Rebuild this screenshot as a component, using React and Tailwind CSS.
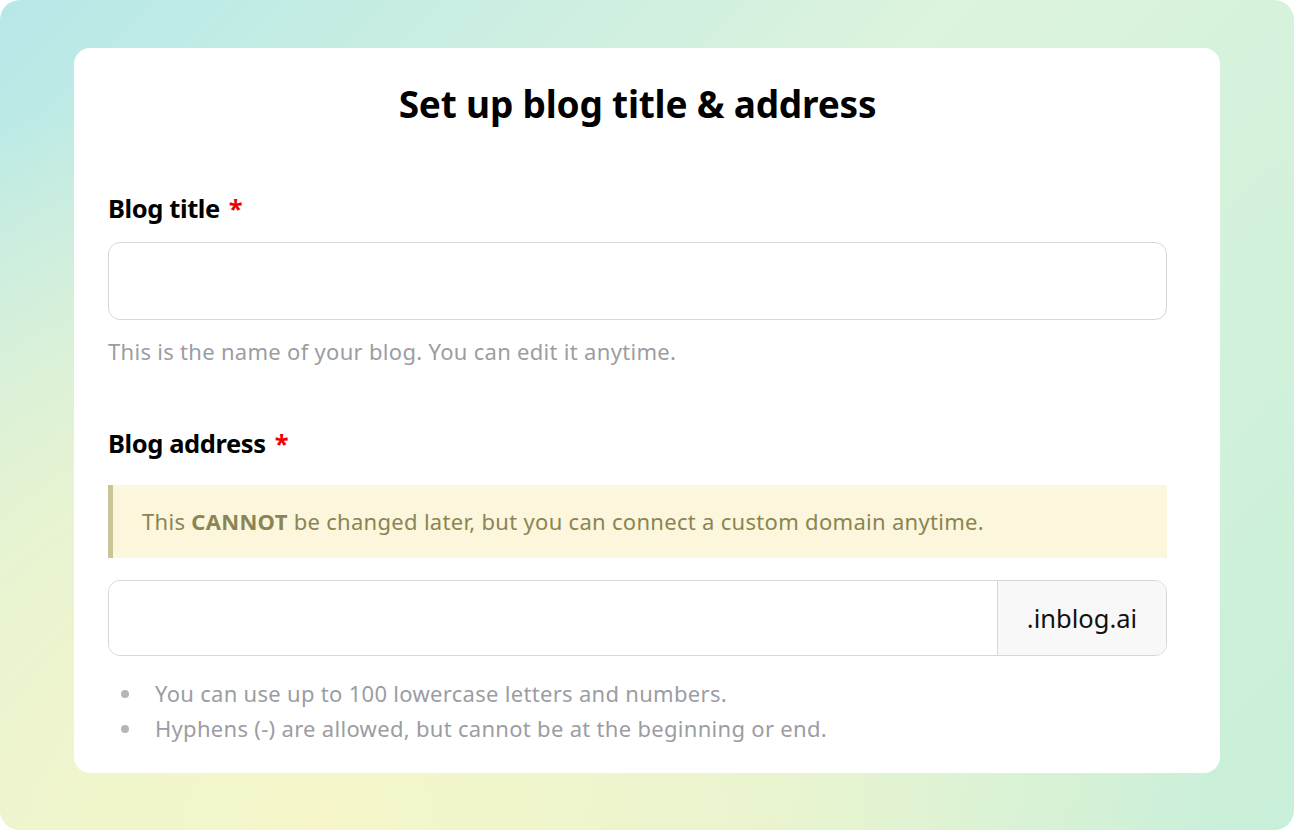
import React from "react";

export default function App() {
  return (
    <div
      className="w-[1294px] h-[830px] bg-white"
      style={{ fontFamily: '"Noto Sans", "Open Sans", sans-serif' }}
    >
      <div className="w-full h-full rounded-[20px] overflow-hidden relative bg-[linear-gradient(135deg,#b6e8e8_0%,#dcf3dc_45%,#c8efd9_100%)] pt-[48px] pl-[74px] pr-[74px]">
        <div className="absolute inset-0 bg-[radial-gradient(ellipse_at_25%_100%,rgba(247,246,200,0.95)_0%,rgba(247,246,200,0.6)_35%,rgba(247,246,200,0)_65%)] pointer-events-none" />
        <div className="relative bg-white rounded-[16px] h-[725px] pl-[34px] pr-[53px] pt-[28px]">
          <h1 className="text-center text-[37px] font-bold text-black leading-[56px] tracking-[-0.2px]">
            Set up blog title &amp; address
          </h1>

          <div className="mt-[60px] text-[25.5px] font-bold text-black leading-[32px] tracking-[-0.4px] flex items-center">
            Blog title <span className="text-[#ee0000] ml-[9px]">*</span>
          </div>
          <div className="mt-[18px] h-[78px] rounded-[12px] border border-[#d6d6d6] bg-white" />
          <div className="mt-[17px] text-[22px] text-[#9b9da3] leading-[28px] tracking-[0.3px]">
            This is the name of your blog. You can edit it anytime.
          </div>

          <div className="mt-[62px] text-[25.5px] font-bold text-black leading-[32px] tracking-[-0.4px] flex items-center">
            Blog address <span className="text-[#ee0000] ml-[9px]">*</span>
          </div>
          <div className="mt-[26px] h-[73px] bg-[#fcf6dd] border-l-[5px] border-[#c9c597] flex items-center pl-[29px] text-[22px] tracking-[0.3px] text-[#8a8552]">
            <span>
              This <b className="font-bold">CANNOT</b> be changed later, but you can connect a custom domain anytime.
            </span>
          </div>
          <div className="mt-[22px] h-[76px] rounded-[12px] border border-[#d6d6d6] flex overflow-hidden">
            <div className="flex-1 bg-white" />
            <div className="w-[169px] border-l border-[#d6d6d6] bg-[#f8f8f8] flex items-center justify-center text-[25.5px] text-[#111]">
              .inblog.ai
            </div>
          </div>
          <div className="mt-[20px] text-[22px] text-[#9b9da3] leading-[35px] tracking-[0.3px] flex flex-col">
            <div className="flex items-center">
              <span className="w-[8px] h-[8px] rounded-full bg-[#b3b5b9] ml-[13px] mr-[26px]" />
              <span>You can use up to 100 lowercase letters and numbers.</span>
            </div>
            <div className="flex items-center">
              <span className="w-[8px] h-[8px] rounded-full bg-[#b3b5b9] ml-[13px] mr-[26px]" />
              <span>Hyphens (-) are allowed, but cannot be at the beginning or end.</span>
            </div>
          </div>
        </div>
      </div>
    </div>
  );
}
